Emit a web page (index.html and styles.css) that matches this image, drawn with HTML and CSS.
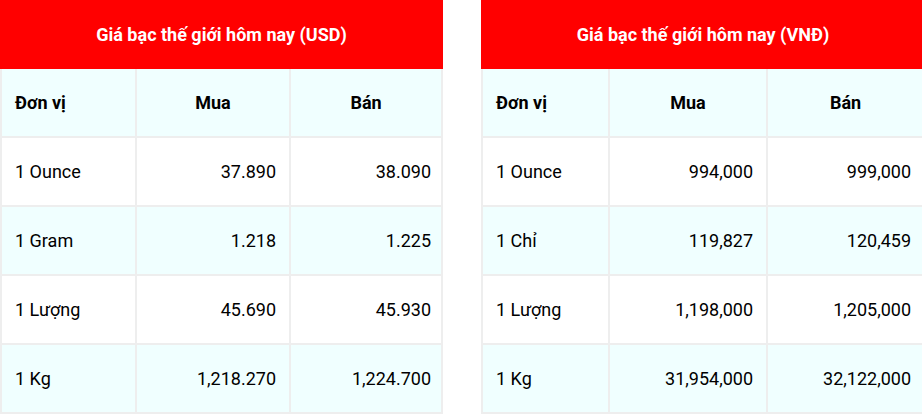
FILE: index.html
```html
<!DOCTYPE html>
<html lang="vi">
<head>
<meta charset="utf-8">
<link rel="stylesheet" href="styles.css">
</head>
<body>
<div class="wrap">
  <table class="price left">
    <colgroup><col class="c1"><col class="c2"><col class="c3"></colgroup>
    <tr><th class="title" colspan="3">Giá bạc thế giới hôm nay (USD)</th></tr>
    <tr class="head alt"><th class="unit">Đơn vị</th><th>Mua</th><th>Bán</th></tr>
    <tr><td class="unit">1 Ounce</td><td class="num">37.890</td><td class="num">38.090</td></tr>
    <tr class="alt"><td class="unit">1 Gram</td><td class="num">1.218</td><td class="num">1.225</td></tr>
    <tr><td class="unit">1 Lượng</td><td class="num">45.690</td><td class="num">45.930</td></tr>
    <tr class="alt"><td class="unit">1 Kg</td><td class="num">1,218.270</td><td class="num">1,224.700</td></tr>
  </table>
  <table class="price right">
    <colgroup><col class="d1"><col class="d2"><col class="d3"></colgroup>
    <tr><th class="title" colspan="3">Giá bạc thế giới hôm nay (VNĐ)</th></tr>
    <tr class="head alt"><th class="unit">Đơn vị</th><th>Mua</th><th>Bán</th></tr>
    <tr><td class="unit">1 Ounce</td><td class="num">994,000</td><td class="num">999,000</td></tr>
    <tr class="alt"><td class="unit">1 Chỉ</td><td class="num">119,827</td><td class="num">120,459</td></tr>
    <tr><td class="unit">1 Lượng</td><td class="num">1,198,000</td><td class="num">1,205,000</td></tr>
    <tr class="alt"><td class="unit">1 Kg</td><td class="num">31,954,000</td><td class="num">32,122,000</td></tr>
  </table>
</div>
</body>
</html>
```

FILE: styles.css
```css
html, body {
  margin: 0;
  padding: 0;
  background: #ffffff;
}
body {
  font-family: Roboto, "Liberation Sans", Arial, sans-serif;
  color: #000000;
}
.wrap {
  display: flex;
}
.price {
  border-collapse: collapse;
  table-layout: fixed;
  font-size: 18px;
}
.left { width: 441px; }
.right { width: 442px; margin-left: 38px; }
.c1 { width: 135px; }
.c2 { width: 154px; }
.c3 { width: 152px; }
.d1 { width: 127px; }
.d2 { width: 158px; }
.d3 { width: 157px; }
.price td, .price th {
  border: 2px solid #eeeeee;
  height: 69px;
  padding: 0 13px;
  vertical-align: middle;
  box-sizing: border-box;
}
.price th {
  font-weight: 700;
  text-align: center;
}
.price .title {
  background: #ff0000;
  color: #ffffff;
  border-color: #ff0000;
  height: 67px;
  font-size: 18px;
}
.alt { background: #f0ffff; }
.price .unit { text-align: left; }
.price .num { text-align: right; }
.left .num:last-child { padding-right: 10px; }
.right .num:last-child { padding-right: 12px; }
```
